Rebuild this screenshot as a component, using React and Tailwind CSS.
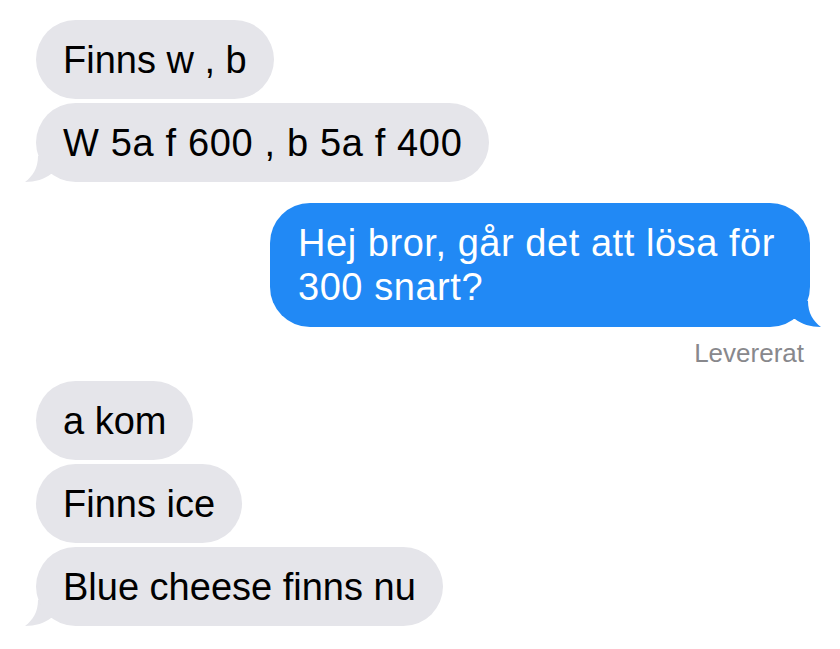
import React from 'react';

const font = { fontFamily: '"Liberation Sans", Arial, sans-serif' };

const GrayTail = () => (
  <svg className="absolute left-[-11px] bottom-0" width="34" height="26" viewBox="0 0 34 26">
    <path d="M13 0 C13 12 8 20 0 26 C10 26 20 23 26 18 L34 18 L34 0 Z" fill="#e5e5ea" />
  </svg>
);

const BlueTail = () => (
  <svg className="absolute right-[-11px] bottom-0" width="34" height="26" viewBox="0 0 34 26">
    <path d="M21 0 C21 12 26 20 34 26 C24 26 14 23 8 18 L0 18 L0 0 Z" fill="#2189f5" />
  </svg>
);

const Incoming = ({ text, tail, wide }) => (
  <div className="relative self-start">
    {tail && <GrayTail />}
    <div
      className={`relative rounded-[40px] bg-[#e5e5ea] px-[27px] py-[17.5px] text-[38px] leading-[44px] text-black whitespace-nowrap ${
        wide ? 'tracking-[0.65px]' : ''
      }`}
    >
      {text}
    </div>
  </div>
);

export default function App() {
  return (
    <div className="w-[840px] h-[649px] bg-white overflow-hidden" style={font}>
      <div className="flex flex-col pl-[36px] pr-[30px] pt-[20px]">
        <div className="flex flex-col gap-[4px]">
          <Incoming text="Finns w , b" />
          <Incoming text="W 5a f 600 , b 5a f 400" tail wide />
        </div>

        <div className="relative self-end mt-[21px]">
          <BlueTail />
          <div className="relative w-[540px] rounded-[40px] bg-[#2189f5] pl-[28px] pr-[16px] py-[18px] text-[38px] leading-[44px] tracking-[0.55px] text-white">
            Hej bror, går det att lösa för<br />300 snart?
          </div>
        </div>

        <div className="self-end pr-[6px] mt-[11px] text-[26px] leading-[30px] text-[#88888c]">
          Levererat
        </div>

        <div className="flex flex-col gap-[4px] mt-[13px]">
          <Incoming text="a kom" />
          <Incoming text="Finns ice" />
          <Incoming text="Blue cheese finns nu" tail />
        </div>
      </div>
    </div>
  );
}
